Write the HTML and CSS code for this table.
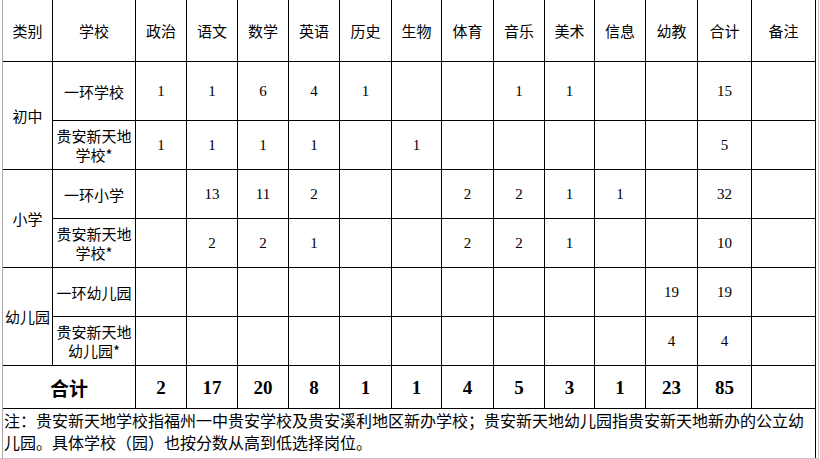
FILE: index.html
```html
<!DOCTYPE html>
<html lang="zh-CN">
<head>
<meta charset="utf-8">
<title>岗位计划表</title>
<link rel="stylesheet" href="styles.css">
</head>
<body>
<div class="frame">
  <div class="sheet">
    <div class="grid">
      <div class="c">类别</div>
      <div class="c">学校</div>
      <div class="c">政治</div>
      <div class="c">语文</div>
      <div class="c">数学</div>
      <div class="c">英语</div>
      <div class="c">历史</div>
      <div class="c">生物</div>
      <div class="c">体育</div>
      <div class="c">音乐</div>
      <div class="c">美术</div>
      <div class="c">信息</div>
      <div class="c">幼教</div>
      <div class="c">合计</div>
      <div class="c">备注</div>

      <div class="c rs">初中</div>
      <div class="c">一环学校</div>
      <div class="c n">1</div><div class="c n">1</div><div class="c n">6</div><div class="c n">4</div><div class="c n">1</div><div class="c n"></div><div class="c n"></div><div class="c n">1</div><div class="c n">1</div><div class="c n"></div><div class="c n"></div><div class="c n">15</div><div class="c"></div>

      <div class="c two">贵安新天地<br>学校*</div>
      <div class="c n">1</div><div class="c n">1</div><div class="c n">1</div><div class="c n">1</div><div class="c n"></div><div class="c n">1</div><div class="c n"></div><div class="c n"></div><div class="c n"></div><div class="c n"></div><div class="c n"></div><div class="c n">5</div><div class="c"></div>

      <div class="c rs">小学</div>
      <div class="c">一环小学</div>
      <div class="c n"></div><div class="c n">13</div><div class="c n">11</div><div class="c n">2</div><div class="c n"></div><div class="c n"></div><div class="c n">2</div><div class="c n">2</div><div class="c n">1</div><div class="c n">1</div><div class="c n"></div><div class="c n">32</div><div class="c"></div>

      <div class="c two">贵安新天地<br>学校*</div>
      <div class="c n"></div><div class="c n">2</div><div class="c n">2</div><div class="c n">1</div><div class="c n"></div><div class="c n"></div><div class="c n">2</div><div class="c n">2</div><div class="c n">1</div><div class="c n"></div><div class="c n"></div><div class="c n">10</div><div class="c"></div>

      <div class="c rs">幼儿园</div>
      <div class="c">一环幼儿园</div>
      <div class="c n"></div><div class="c n"></div><div class="c n"></div><div class="c n"></div><div class="c n"></div><div class="c n"></div><div class="c n"></div><div class="c n"></div><div class="c n"></div><div class="c n"></div><div class="c n">19</div><div class="c n">19</div><div class="c"></div>

      <div class="c two">贵安新天地<br>幼儿园*</div>
      <div class="c n"></div><div class="c n"></div><div class="c n"></div><div class="c n"></div><div class="c n"></div><div class="c n"></div><div class="c n"></div><div class="c n"></div><div class="c n"></div><div class="c n"></div><div class="c n">4</div><div class="c n">4</div><div class="c"></div>

      <div class="c cs total-label">合计</div>
      <div class="c t">2</div><div class="c t">17</div><div class="c t">20</div><div class="c t">8</div><div class="c t">1</div><div class="c t">1</div><div class="c t">4</div><div class="c t">5</div><div class="c t">3</div><div class="c t">1</div><div class="c t">23</div><div class="c t">85</div><div class="c"></div>

      <div class="note">注：贵安新天地学校指福州一中贵安学校及贵安溪利地区新办学校；贵安新天地幼儿园指贵安新天地新办的公立幼<br>儿园。具体学校（园）也按分数从高到低选择岗位。</div>
    </div>
  </div>
</div>
</body>
</html>
```

FILE: styles.css
```css
html, body {
  margin: 0;
  padding: 0;
  background: #ffffff;
}

body {
  font-family: "Noto Sans CJK SC", "Noto Sans", sans-serif;
  color: #000;
}

.frame {
  box-sizing: border-box;
  width: 819px;
  height: 459px;
  border-right: 1px solid #c4c4c4;
  border-bottom: 1px solid #c4c4c4;
}

.sheet {
  margin-left: 2px;
  width: 813px;
  border-left: 1px solid #a8a8a8;
}

.grid {
  display: grid;
  grid-template-columns: 50px 83px 51px 51px 51px 51px 52px 50px 52px 51px 50px 51px 52px 54px 64px;
  grid-template-rows: 62px 59px 49px 49px 49px 49px 49px 43px 49px;
}

.c {
  box-sizing: border-box;
  border-right: 1px solid #000;
  border-bottom: 1px solid #000;
  display: flex;
  align-items: center;
  justify-content: center;
  text-align: center;
  font-size: 15px;
  line-height: 19px;
  white-space: nowrap;
}

.rs {
  grid-row: span 2;
}

.cs {
  grid-column: span 2;
}

.n {
  font-family: "Liberation Serif", "Noto Sans CJK SC", serif;
  font-size: 15px;
}

.t {
  font-family: "Liberation Serif", serif;
  font-weight: bold;
  font-size: 19px;
}

.total-label {
  font-weight: bold;
  font-size: 19px;
}

.note {
  grid-column: 1 / -1;
  box-sizing: border-box;
  border-right: 1px solid #000;
  padding: 0 0 0 1px;
  font-size: 16px;
  line-height: 22px;
  white-space: nowrap;
}
```
